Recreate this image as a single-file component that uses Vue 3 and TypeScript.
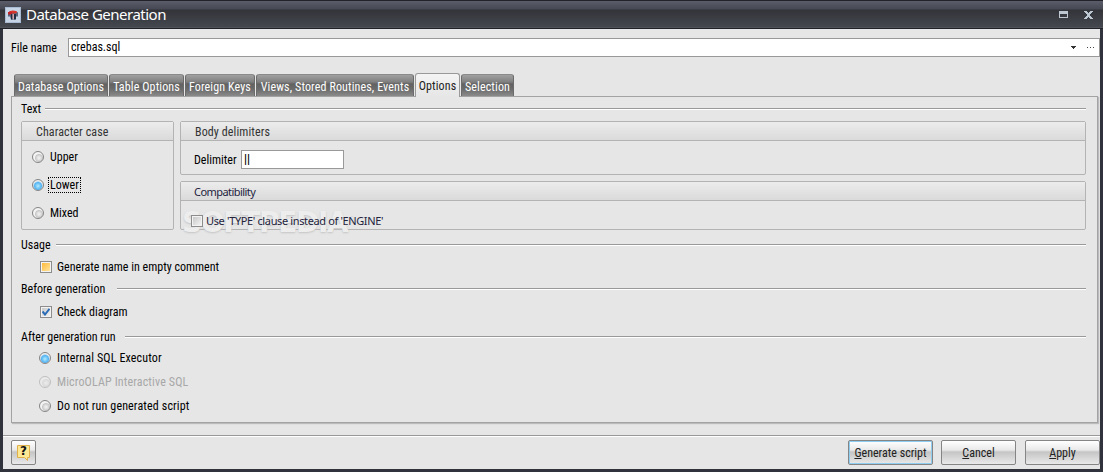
<template>
  <div class="window">
    <header class="titlebar">
      <svg class="app-icon" viewBox="0 0 16 16">
        <rect x="0" y="0" width="16" height="16" fill="#a9bbd3" />
        <rect x="1" y="1" width="14" height="14" fill="#c6d4e6" />
        <path d="M3 5.5l2-1h6l2 1v4h-2l-1 3H6L5 9.500H3z" fill="#59657d" />
        <ellipse cx="8" cy="5" rx="4" ry="1.6" fill="#d8342c" />
        <rect x="3" y="5" width="4" height="2.500" fill="#c3232b" />
        <rect x="6" y="7" width="1.5" height="5.5" fill="#222c42" />
        <rect x="7.5" y="7" width="1.5" height="5" fill="#d7a6ac" />
        <rect x="9" y="7" width="2" height="5.5" fill="#222c42" />
      </svg>
      <h1>Database Generation</h1>
      <svg class="maximize" viewBox="0 0 9 7" shape-rendering="crispEdges">
        <path d="M0 0h9v7H0zM1 3v3h7V3z" fill="#bcc7d2" fill-rule="evenodd" />
      </svg>
      <svg class="close" viewBox="0 0 9 8" shape-rendering="crispEdges">
        <path d="M0 0h3v1h1v1h1V1h1V0h3v1H8v1H7v1H6v2h1v1h1v1h1v1H6V7H5V6H4v1H3v1H0V7h1V6h1V5h1V3H2V2H1V1H0z" fill="#bcc7d2" />
      </svg>
    </header>

    <div class="file-row">
      <span class="file-label">File name</span>
      <div class="file-input">
        <span class="file-value">crebas.sql</span>
        <svg class="arrow" viewBox="0 0 5 3" shape-rendering="crispEdges">
          <path d="M0 0h5v1H4v1H3v1H2V2H1V1H0z" fill="#333" />
        </svg>
        <svg class="dots" viewBox="0 0 8 1" shape-rendering="crispEdges">
          <path d="M0 0h1v1H0zM3 0h1v1H3zM6 0h1v1H6z" fill="#444" />
        </svg>
      </div>
    </div>

    <nav class="tabs">
      <div
        v-for="tab in tabs"
        :key="tab.label"
        class="tab"
        :class="{ active: tab.label === activeTab }"
        :style="{ width: `${tab.width}px` }"
        @click="activeTab = tab.label"
      >
        <span>{{ tab.label }}</span>
      </div>
    </nav>

    <main class="page">
      <div class="section text-title"><span>Text</span></div>
      <div class="groups">
        <section class="group case-group">
          <h2>Character case</h2>
          <label
            v-for="item in cases"
            :key="item"
            class="choice"
            @click="charCase = item"
          >
            <i class="radio" :class="{ on: charCase === item }"></i>
            <span :class="{ focused: charCase === item }">{{ item }}</span>
          </label>
        </section>
        <div class="group-column">
          <section class="group body-group">
            <h2>Body delimiters</h2>
            <div class="delimiter-row">
              <span class="delimiter-label">Delimiter</span>
              <div class="delimiter-input">||</div>
            </div>
          </section>
          <section class="group compat-group">
            <h2>Compatibility</h2>
            <div class="watermark">SOFTPEDIA<sup>®</sup></div>
            <label class="choice compat-choice">
              <i class="checkbox"></i>
              <span>Use 'TYPE' clause instead of 'ENGINE'</span>
            </label>
          </section>
        </div>
      </div>

      <div class="section usage-title"><span>Usage</span></div>
      <label class="choice usage-choice">
        <i class="checkbox hot"></i>
        <span>Generate name in empty comment</span>
      </label>

      <div class="section before-title"><span>Before generation</span></div>
      <label class="choice check-choice">
        <i class="checkbox">
          <svg viewBox="0 0 8 8">
            <path d="M0.5 3.5L3 6.5L7.5 0.8" fill="none" stroke="#2b6cb8" stroke-width="2" />
          </svg>
        </i>
        <span>Check diagram</span>
      </label>

      <div class="section after-title"><span>After generation run</span></div>
      <div class="run-list">
        <label
          v-for="mode in runModes"
          :key="mode.label"
          class="choice"
          :class="{ disabled: mode.disabled }"
        >
          <i class="radio" :class="{ on: runMode === mode.label }"></i>
          <span>{{ mode.label }}</span>
        </label>
      </div>
    </main>

    <footer class="footer">
      <button class="button help">
        <svg viewBox="0 0 15 16">
          <path d="M1.5 0.5h12v12h-2v3l-3-3h-7z" fill="#ffe894" stroke="#dfb04a" />
        </svg>
        <b>?</b>
      </button>
      <button class="button generate"><span><u>G</u>enerate script</span></button>
      <button class="button cancel"><span><u>C</u>ancel</span></button>
      <button class="button apply"><span><u>A</u>pply</span></button>
    </footer>
  </div>
</template>

<script setup lang="ts">
import { ref } from "vue";

interface RunMode {
  label: string;
  disabled?: boolean;
}

const tabs = [
  { label: "Database Options", width: 94 },
  { label: "Table Options", width: 75 },
  { label: "Foreign Keys", width: 70 },
  { label: "Views, Stored Routines, Events", width: 158 },
  { label: "Options", width: 45 },
  { label: "Selection", width: 53 },
];
const activeTab = ref("Options");

const cases = ["Upper", "Lower", "Mixed"];
const charCase = ref("Lower");

const runModes: RunMode[] = [
  { label: "Internal SQL Executor" },
  { label: "MicroOLAP Interactive SQL", disabled: true },
  { label: "Do not run generated script" },
];
const runMode = ref("Internal SQL Executor");
</script>

<style>
body {
  margin: 0;
  overflow: hidden;
}
</style>

<style scoped>
.window {
  box-sizing: border-box;
  width: 1103px;
  height: 472px;
  display: flex;
  flex-direction: column;
  background: #e6e6e6;
  border: solid #30333b;
  border-width: 0 3px 3px;
  font: 420 12px/14px "Roboto Condensed", Roboto, "Liberation Sans", sans-serif;
  color: #000;
}

.titlebar {
  height: 29px;
  box-sizing: border-box;
  margin: 0 -3px;
  flex: none;
  display: flex;
  align-items: center;
  padding: 0 10px 0 5px;
  border-top: 1px solid #22232a;
  border-bottom: 1px solid #202128;
  background: linear-gradient(#5b5e6a 0, #464853 8px, #33343a 9px, #44474e 26px, #5b5d66 27px);
}

.app-icon {
  width: 16px;
  height: 16px;
}

h1 {
  margin: -2px auto 0 5px;
  font: 15px/18px "Noto Sans", sans-serif;
  letter-spacing: -0.5px;
  color: #fff;
}

.maximize {
  width: 9px;
  height: 7px;
  margin-right: 16px;
}

.close {
  width: 9px;
  height: 8px;
}

.file-row {
  height: 19px;
  margin: 9px 0 0 8px;
  display: flex;
  align-items: center;
}

.file-label {
  width: 57px;
}

.file-input {
  box-sizing: border-box;
  height: 19px;
  flex: 1;
  display: flex;
  align-items: center;
  border: 1px solid #999;
  background: #fff;
  padding: 0 4px 0 2px;
}

.file-value {
  flex: 1;
  margin-top: -1px;
}

.arrow {
  width: 5px;
  height: 3px;
  margin-right: 11px;
}

.dots {
  width: 8px;
  height: 1px;
}

.tabs {
  height: 23px;
  margin: 16px 0 0 11px;
  display: flex;
  align-items: flex-end;
  gap: 1px;
}

.tab {
  box-sizing: border-box;
  height: 22px;
  border: 1px solid #6b6b6b;
  border-top-color: #8a8a8a;
  border-bottom: 0;
  border-radius: 3px 3px 0 0;
  background: linear-gradient(#a0a0a0 0, #808080 7px, #626262 9px, #6b6b6b 14px, #8a8a8a 21px);
  color: #fff;
  letter-spacing: 0.12px;
  line-height: 24px;
  text-align: center;
  white-space: nowrap;
}

.tab.active {
  height: 24px;
  margin-bottom: -1px;
  background: linear-gradient(#f4f4f4, #e6e6e6);
  border-color: #999;
  color: #222;
  z-index: 1;
}

.page {
  box-sizing: border-box;
  height: 328px;
  margin: 0 2px 0 8px;
  border: 1px solid #a3a3a3;
  box-shadow: 1px 1px 1px #bbb;
  padding: 5px 11px 0 9px;
}

.section {
  height: 14px;
  display: flex;
}

.section::after {
  content: "";
  flex: 1;
  height: 1px;
  margin-top: 6px;
  background: #999;
  border-bottom: 1px solid #fff;
}

.text-title span {
  width: 24px;
}

.usage-title span {
  width: 35px;
}

.before-title span {
  width: 96px;
}

.after-title span {
  width: 104px;
}

.groups {
  display: flex;
  gap: 6px;
  margin-top: 5px;
}

.group {
  box-sizing: border-box;
  border: 1px solid #b3b3b3;
  border-radius: 2px;
}

h2 {
  margin: 0;
  height: 18px;
  padding-left: 14px;
  border-bottom: 1px solid #b3b3b3;
  background: linear-gradient(#ececec, #dadada);
  font: inherit;
  letter-spacing: 0.1px;
  line-height: 20px;
  color: #333;
}

.case-group {
  width: 153px;
  height: 109px;
}

.group-column {
  flex: 1;
  display: flex;
  flex-direction: column;
  gap: 6px;
}

.body-group {
  height: 54px;
}

.compat-group {
  height: 49px;
  position: relative;
}

.choice {
  display: flex;
  align-items: center;
  height: 14px;
  white-space: nowrap;
}

.case-group .choice {
  margin: 9px 0 0 10px;
  height: 14px;
  gap: 5px;
}

.case-group .choice + .choice {
  margin-top: 14px;
}

.case-group .choice span {
  padding: 0 1px;
}

.focused {
  outline: 1px dotted #000;
}

.radio {
  box-sizing: border-box;
  width: 12px;
  height: 12px;
  border: 1px solid #858585;
  border-radius: 50%;
  background: radial-gradient(circle at 60% 60%, #ececec 1px, #c8c8c8 3.5px, #f4f4f4 4.5px);
}

.radio.on {
  background: radial-gradient(circle at 50% 60%, #b4ecff 0, #55b4f2 3.5px, #eee 5px);
}

.disabled {
  color: #a8a8a8;
}

.disabled .radio {
  opacity: 0.4;
}

.checkbox {
  box-sizing: border-box;
  width: 12px;
  height: 12px;
  border: 1px solid #8c8c8c;
  background: linear-gradient(135deg, #c3c3c3, #f7f7f7);
  box-shadow: inset 0 0 0 1px #f3f3f3;
}

.checkbox svg {
  display: block;
  width: 8px;
  height: 8px;
  margin: 1px;
}

.checkbox.hot {
  background: linear-gradient(135deg, #ffb52f, #ffe9a9);
}

.delimiter-row {
  display: flex;
  align-items: center;
  margin: 9px 0 0 13px;
}

.delimiter-label {
  width: 47px;
}

.delimiter-input {
  box-sizing: border-box;
  width: 103px;
  height: 19px;
  padding-left: 2px;
  border: 1px solid #999;
  background: #fff;
  font-weight: 600;
  line-height: 16px;
}

.compat-group h2,
.compat-choice {
  font-family: "Noto Sans", sans-serif;
  font-weight: 400;
  font-size: 11px;
  letter-spacing: -0.37px;
  color: #23233c;
}

.compat-group h2 {
  padding-left: 13px;
  letter-spacing: -0.55px;
}

.compat-choice {
  position: relative;
  margin: 13px 0 0 10px;
  gap: 3px;
}

.watermark {
  position: absolute;
  left: 1px;
  top: 22px;
  font: bold 28px/30px "DejaVu Sans", sans-serif;
  letter-spacing: -1.3px;
  color: #ededed;
  text-shadow: 0 1px 2px #c4c4c4;
}

.watermark sup {
  font-size: 9px;
}

.usage-title {
  margin-top: 8px;
}

.usage-choice {
  margin: 8px 0 0 19px;
  gap: 5px;
}

.before-title {
  margin-top: 8px;
}

.check-choice {
  margin: 9px 0 0 19px;
  gap: 5px;
}

.after-title {
  margin-top: 11px;
}

.run-list {
  display: flex;
  flex-direction: column;
  gap: 10px;
  margin: 7px 0 0 18px;
  letter-spacing: 0.14px;
}

.run-list .choice {
  gap: 6px;
}

.footer {
  height: 33px;
  margin-top: 12px;
  display: flex;
  align-items: center;
  gap: 8px;
  padding-left: 8px;
  border-top: 1px solid #999;
  box-shadow: inset 0 1px #fff;
}

.button {
  box-sizing: border-box;
  width: 75px;
  height: 25px;
  padding: 0;
  border: 1px solid #858585;
  border-radius: 2px;
  background: linear-gradient(#fff 0, #e9e9e9 9px, #c5c5c5 11px, #e9e9e9 100%);
  font: inherit;
  color: #222;
}

.help {
  display: grid;
  place-items: center;
  width: 25px;
  margin-right: auto;
}

.help svg,
.help b {
  grid-area: 1 / 1;
}

.help svg {
  width: 15px;
  height: 16px;
}

.help b {
  font: bold 12px/12px "DejaVu Sans", sans-serif;
  margin-top: -3px;
  color: #111;
}

.generate {
  width: 85px;
  box-shadow: inset 0 0 0 1px #8fcdf0;
}

.apply {
  margin-left: 1px;
}
</style>
